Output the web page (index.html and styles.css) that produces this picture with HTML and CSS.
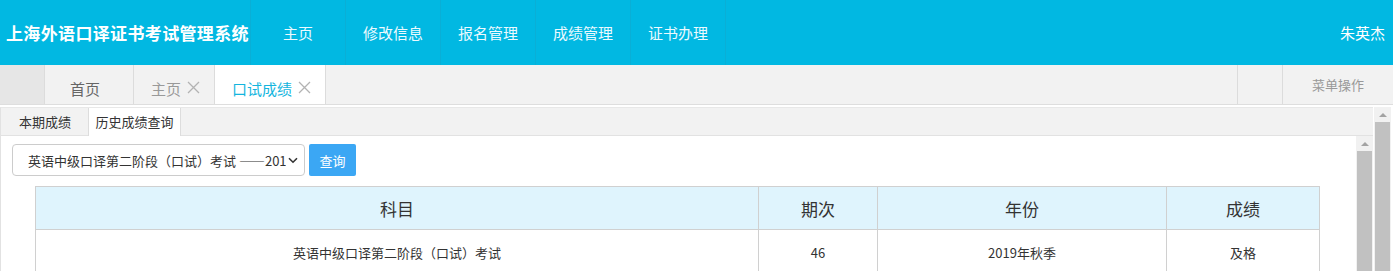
FILE: index.html
```html
<!DOCTYPE html>
<html lang="zh-CN">
<head>
    <meta charset="UTF-8">
    <meta name="viewport" content="width=device-width, initial-scale=1.0">
    <title>上海外语口译证书考试管理系统</title>
    <link rel="stylesheet" href="styles.css">
</head>
<body>

    <div id="header">
        <div class="brand">上海外语口译证书考试管理系统</div>
        <ul class="nav">
            <li>主页</li>
            <li>修改信息</li>
            <li>报名管理</li>
            <li>成绩管理</li>
            <li>证书办理</li>
        </ul>
        <div class="user">朱英杰</div>
    </div>

    <div id="tabbar">
        <div class="tab-lead"></div>
        <div class="tab tab-home">首页</div>
        <div class="tab">主页
            <svg class="close" width="13" height="13" viewBox="0 0 13 13"><path d="M1 1 L12 12 M12 1 L1 12" stroke="#b3b3b3" stroke-width="1.3"/></svg>
        </div>
        <div class="tab active">口试成绩
            <svg class="close" width="13" height="13" viewBox="0 0 13 13"><path d="M1 1 L12 12 M12 1 L1 12" stroke="#b3b3b3" stroke-width="1.3"/></svg>
        </div>
        <div class="tab-space"></div>
        <div class="tab-tool"></div>
        <div class="tab-menu">菜单操作</div>
    </div>

    <div id="main">
        <div class="frame">
            <div class="panel">
                <div class="subtabs">
                    <div class="subtab">本期成绩</div>
                    <div class="subtab active">历史成绩查询</div>
                </div>
                <div class="panel-body">
                    <div class="content">
                        <div class="search">
                            <div class="select">
                                <span class="select-text">英语中级口译第二阶段（口试）考试 ——2019年秋季</span>
                                <svg class="chevron" width="10" height="7" viewBox="0 0 10 7">
                                    <path d="M1 1.2 L5 5.2 L9 1.2" fill="none" stroke="#333" stroke-width="1.6"/>
                                </svg>
                            </div>
                            <button class="btn">查询</button>
                        </div>

                        <table class="grid">
                            <thead>
                                <tr>
                                    <th class="c-subject">科目</th>
                                    <th class="c-term">期次</th>
                                    <th class="c-year">年份</th>
                                    <th class="c-score">成绩</th>
                                </tr>
                            </thead>
                            <tbody>
                                <tr>
                                    <td>英语中级口译第二阶段（口试）考试</td>
                                    <td>46</td>
                                    <td>2019年秋季</td>
                                    <td>及格</td>
                                </tr>
                            </tbody>
                        </table>
                    </div>
                    <div class="scrollbar inner">
                        <div class="arrow"></div>
                        <div class="thumb"></div>
                    </div>
                </div>
            </div>
        </div>
        <div class="scrollbar outer">
            <div class="arrow"></div>
            <div class="thumb"></div>
        </div>
    </div>

</body>
</html>
```

FILE: styles.css
```css
body {
    font-family: "Noto Sans CJK SC", "Noto Sans", sans-serif;
    background: #fff;
    color: #333;
    margin: 0;
    height: 271px;
    overflow: hidden;
}

#header {
    display: flex;
    align-items: center;
    height: 65px;
    background: #01b8e2;
    color: #fff;
}

.brand {
    width: 244px;
    padding-left: 6px;
    font-size: 17px;
    font-weight: bold;
    letter-spacing: 0.35px;
    white-space: nowrap;
}

.nav {
    display: flex;
    list-style: none;
    margin: 0;
    padding: 0;
}

.nav li {
    width: 94px;
    height: 65px;
    line-height: 65px;
    text-align: center;
    font-size: 15px;
    color: #ecfaff;
    border-left: 1px solid #0aafd6;
}

.nav li:last-child {
    border-right: 1px solid #0aafd6;
}

.user {
    margin-left: auto;
    padding-right: 8px;
    font-size: 15px;
}

#tabbar {
    display: flex;
    height: 39px;
    background: #f2f2f2;
    border-bottom: 1px solid #dedede;
}

.tab-lead {
    width: 44px;
    background: #e6e6e6;
    border-right: 1px solid #dcdcdc;
}

.tab {
    display: flex;
    align-items: center;
    padding: 7px 14px 0 17px;
    font-size: 15px;
    color: #999;
    border-right: 1px solid #dcdcdc;
}

.tab-home {
    width: 63px;
    padding-left: 25px;
    padding-right: 0;
    color: #666;
}

.tab .close {
    margin-left: 6px;
    margin-top: -2px;
}

.tab.active {
    background: #fff;
    color: #13b5de;
}

.tab-space {
    flex: 1;
}

.tab-tool {
    width: 44px;
    border-left: 1px solid #dcdcdc;
}

.tab-menu {
    width: 110px;
    border-left: 1px solid #dcdcdc;
    text-align: center;
    line-height: 39px;
    font-size: 13px;
    color: #999;
}

#main {
    display: flex;
    padding-top: 2px;
}

.frame {
    flex: 1;
}

.panel {
    border-left: 1px solid #e2e2e2;
    border-top: 1px solid #e8e8e8;
    margin-right: 1px;
}

.subtabs {
    display: flex;
    height: 27px;
    padding-left: 1px;
    background: #f2f2f2;
    border-bottom: 1px solid #e2e2e2;
}

.subtab {
    width: 86px;
    line-height: 27px;
    text-align: center;
    font-size: 13px;
    color: #333;
}

.subtab.active {
    width: 91px;
    background: #fff;
    border-left: 1px solid #ddd;
    border-right: 1px solid #ddd;
    height: 28px;
}

.panel-body {
    display: flex;
}

.content {
    flex: 1;
    padding: 8px 0 0 11px;
}

.search {
    display: flex;
    gap: 4px;
}

.select {
    display: flex;
    align-items: center;
    width: 270px;
    height: 30px;
    padding: 0 6px 0 15px;
    border: 1px solid #ccc;
    border-radius: 4px;
    background: #fff;
    font-size: 13px;
}

.select-text {
    flex: 1;
    overflow: hidden;
    white-space: nowrap;
}

.chevron {
    margin-left: 2px;
}

.btn {
    width: 47px;
    height: 32px;
    border: none;
    border-radius: 2px;
    background: #3ba7f4;
    color: #fff;
    font-family: inherit;
    font-size: 13px;
    padding: 0;
}

.grid {
    margin: 10px 0 0 23px;
    width: 1285px;
    border-collapse: collapse;
    table-layout: fixed;
}

.grid th, .grid td {
    box-sizing: border-box;
    padding: 0;
    border: 1px solid #d0d0d0;
    text-align: center;
}

.grid th {
    height: 43px;
    background: #dff4fd;
    font-size: 17px;
    font-weight: normal;
    color: #333;
}

.grid td {
    height: 46px;
    font-size: 13px;
    color: #333;
}

.c-subject { width: 723px; }
.c-term { width: 119px; }
.c-year { width: 289px; }
.c-score { width: 153px; }

.scrollbar {
    width: 17px;
    background: #f1f1f1;
    display: flex;
    flex-direction: column;
    align-items: center;
}

.scrollbar .arrow {
    width: 0;
    height: 0;
    margin: 6px 0 5px;
    border-left: 4px solid transparent;
    border-right: 4px solid transparent;
    border-bottom: 4px solid #a3a3a3;
}

.scrollbar .thumb {
    width: 15px;
    height: 200px;
    background: #c1c1c1;
}

.scrollbar.outer {
    margin-right: 2px;
}
```
